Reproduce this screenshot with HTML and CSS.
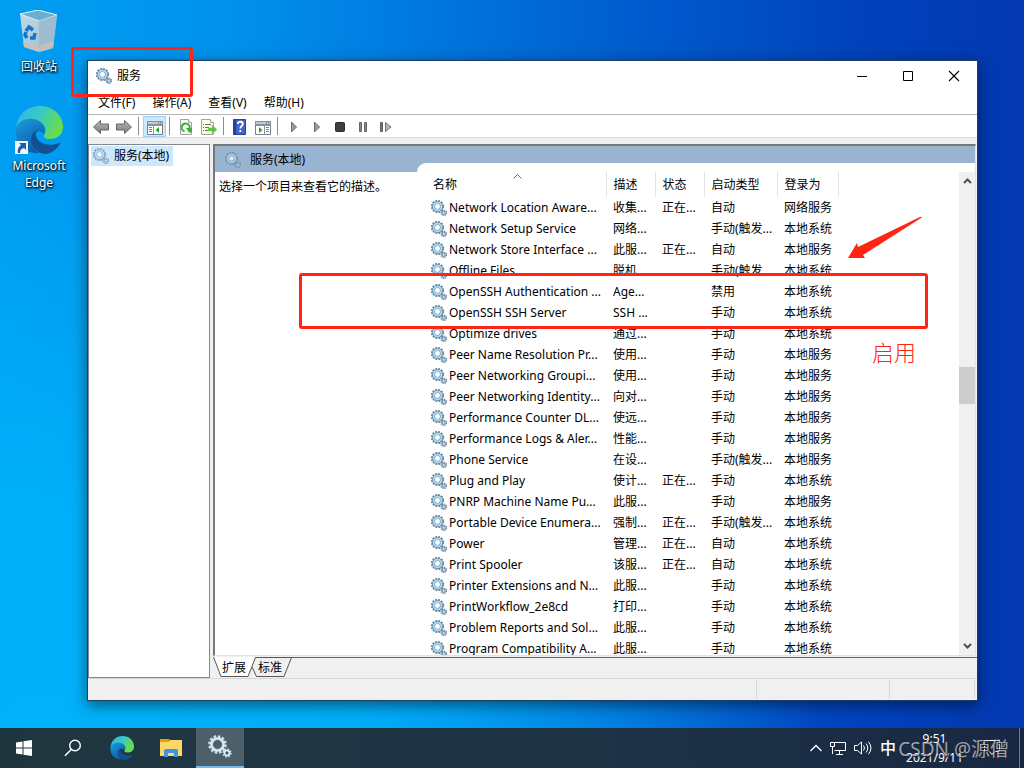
FILE: index.html
```html
<!DOCTYPE html>
<html lang="zh-CN">
<head>
<meta charset="utf-8">
<title>服务</title>
<link rel="stylesheet" href="styles.css">
</head>
<body>
<svg class="defs" aria-hidden="true">
  <defs>
    <linearGradient id="edge-top" x1="0" y1="0" x2="1" y2="0.4"><stop offset="0" stop-color="#2fb4e6"/><stop offset=".5" stop-color="#37c8c8"/><stop offset="1" stop-color="#66dd4e"/></linearGradient>
    <linearGradient id="edge-left" x1="0" y1="0" x2="0.6" y2="1"><stop offset="0" stop-color="#1b9de2"/><stop offset="1" stop-color="#0c59a4"/></linearGradient>
    <linearGradient id="bin-face" x1="0" y1="0" x2="1" y2="1"><stop offset="0" stop-color="#c3dcea"/><stop offset="1" stop-color="#9fb9c8"/></linearGradient>
    <linearGradient id="arrow-grey" x1="0" y1="0" x2="0" y2="1"><stop offset="0" stop-color="#b8b8b8"/><stop offset="1" stop-color="#7c7c7c"/></linearGradient>
    <symbol id="gear" viewBox="0 0 16 16">
      <circle cx="6.500" cy="6.500" r="5.700" fill="none" stroke="#6288a4" stroke-width="1.900" stroke-dasharray="1.800 1.184"/>
      <circle cx="6.500" cy="6.500" r="4" fill="none" stroke="#648fae" stroke-width="3.200"/>
      <circle cx="6.500" cy="6.500" r="3.900" fill="none" stroke="#b4d7ea" stroke-width="1.800"/>
      <circle cx="6.500" cy="6.500" r="2.200" fill="#fff"/>
      <circle cx="12.800" cy="12.800" r="2.700" fill="none" stroke="#67859b" stroke-width="1.400" stroke-dasharray="1.200 .92"/>
      <circle cx="12.800" cy="12.800" r="1.600" fill="#d6e7f1" stroke="#7c9db4" stroke-width="1.200"/>
    </symbol>
    <symbol id="edge" viewBox="0 0 48 48">
      <path d="M1 23C2 9 12 0 25 0c14 0 23 10 23 21 0 8-6 12-13 12-5 0-7-2-6-4 3-4 2-11-5-13C14 13 4 16 1 23z" fill="url(#edge-top)"/>
      <path d="M1 22c3-8 13-11 21-8 7 3 9 9 7 14-4-4-10-3-12 2-3 7 1 13 7 17C10 48-1 37 1 22z" fill="url(#edge-left)"/>
      <path d="M17 29c-4 9 4 19 14 19 6-1 11-5 14-10 1-1 0-2-1-1-9 4-21 1-23-7-1-3 1-6 3-6-3 0-6 2-7 5z" fill="#144f91"/>
    </symbol>
    <symbol id="play" viewBox="0 0 16 16"><path d="M5.500 3L10.500 8L5.500 13z" fill="#9a9a9a" stroke="#6f6f6f"/></symbol>
  </defs>
</svg>

<main class="desktop">
  <button class="shortcut shortcut-bin">
    <svg width="40" height="44" viewBox="0 0 40 44">
      <path d="M1 4L19 0L38 5L34 38L20 42L5 37z" fill="url(#bin-face)"/>
      <path d="M1 4L19 0L38 5L20 11z" fill="#69afd2" stroke="#e3eff5"/>
      <path d="M20 11L38 5L34 38L20 42z" fill="#9dbdce"/>
      <path d="M4 32L20 36L35 31L34 38L20 42L5 37z" fill="#c9c0be" opacity=".8"/>
      <g fill="none" stroke="#1276cd" stroke-width="3.500"><path d="M7 21L10 17L14 20"/><path d="M16 23L15 28L11 28"/><path d="M8 28L6 25L7 22"/></g>
    </svg>
    <span>回收站</span>
  </button>
  <button class="shortcut shortcut-edge">
    <span class="edge-picture">
      <svg width="48" height="48"><use href="#edge"/></svg>
      <svg class="link-mark" width="13" height="13" viewBox="0 0 13 13"><path d="M0 0h13v13H0z" fill="#f3f3f3"/><path d="M4 2h7v7L9 7C6 8 5 9 5 12H3C2 8 4 6 6 4z" fill="#1f5ea8"/></svg>
    </span>
    <span>Microsoft Edge</span>
  </button>

  <section class="window">
    <header class="titlebar">
      <svg width="16" height="16"><use href="#gear"/></svg>
      <h1>服务</h1>
      <div class="controls">
        <button aria-label="最小化"><svg width="12" height="12"><path d="M1 6.500h10" stroke="#000"/></svg></button>
        <button aria-label="最大化"><svg width="12" height="12"><path d="M1.500 1.500h9v9h-9z" fill="none" stroke="#000"/></svg></button>
        <button aria-label="关闭"><svg width="12" height="12"><path d="M1 1L11 11M11 1L1 11" stroke="#000" stroke-width="1.100"/></svg></button>
      </div>
    </header>
    <nav class="menubar">
      <button>文件(F)</button><button>操作(A)</button><button>查看(V)</button><button>帮助(H)</button>
    </nav>
    <div class="toolbar">
      <button aria-label="后退"><svg width="16" height="16" viewBox="0 0 16 16"><path d="M.5 8L7.500 1.500V5H15.500V11H7.500V14.500z" fill="url(#arrow-grey)" stroke="#666"/></svg></button>
      <button aria-label="前进"><svg width="16" height="16" viewBox="0 0 16 16"><path d="M15.500 8L8.500 1.500V5H.5V11H8.500V14.500z" fill="url(#arrow-grey)" stroke="#666"/></svg></button>
      <span class="sep"></span>
      <button class="pressed" aria-label="显示控制台树"><svg width="16" height="16" viewBox="0 0 16 16"><path d="M.5 2.500h15v13H.5z" fill="#fff" stroke="#788089"/><path d="M0 2h16v4H0z" fill="#87919c"/><path d="M1 4h10M12 4h1M14 4h1" stroke="#fff"/><path d="M1 6.500h14M6.500 7v8" stroke="#8a939c"/><path d="M2 8.500h3M2 10.500h3M2 12.500h3" stroke="#5d87ba"/><path d="M12 8v6L8.500 11z" fill="#2ea52e"/></svg></button>
      <span class="sep"></span>
      <button aria-label="刷新"><svg width="16" height="16" viewBox="0 0 16 16"><path d="M2.500.5h8l3 3v12h-11z" fill="#f7f7f7" stroke="#a3a3a3"/><path d="M10.500.5v3h3" fill="#fff" stroke="#a3a3a3"/><path d="M6.500 12.300A4 4 0 1 1 11.500 9.500" fill="none" stroke="#3aae37" stroke-width="2"/><path d="M8 9h6v4.500H11z" fill="#3aae37"/></svg></button>
      <button aria-label="导出列表"><svg width="16" height="16" viewBox="0 0 16 16"><path d="M.5.5h9l3 3v12H.5z" fill="#fffbe2" stroke="#aaa68e"/><path d="M9.500.5v3h3" fill="#fff" stroke="#aaa68e"/><path d="M2 5.500h1M2 8.500h1M2 11.500h1M4 5.500h6M4 8.500h4M4 11.500h4" stroke="#6a6a82"/><path d="M7 9h4V6L16 10.500L11 15V12H7z" fill="#57c63f" stroke="#80d46c" stroke-width=".5"/></svg></button>
      <span class="sep"></span>
      <button aria-label="帮助"><svg width="16" height="16" viewBox="0 0 16 16"><path d="M1.500.5h12v15h-12z" fill="#4463c8" stroke="#29429a"/><path d="M2 1h2v14H2z" fill="#273f97"/><path d="M5.800 5c0-3 5-3 5 0 0 2-2.500 2-2.500 4.500M8.300 11v2" fill="none" stroke="#fff" stroke-width="1.800"/></svg></button>
      <button aria-label="显示操作窗格"><svg width="16" height="16" viewBox="0 0 16 16"><path d="M.5 2.500h15v13H.5z" fill="#fff" stroke="#788089"/><path d="M0 2h16v4H0z" fill="#87919c"/><path d="M1 4h10M12 4h1M14 4h1" stroke="#fff"/><path d="M1 6.500h14M9.500 7v8" stroke="#8a939c"/><path d="M11 8.500h3M11 10.500h3M11 12.500h3" stroke="#5d87ba"/><path d="M4 8v6L7.500 11z" fill="#2ea52e"/></svg></button>
      <span class="sep"></span>
      <button aria-label="启动服务"><svg width="16" height="16"><use href="#play"/></svg></button>
      <button aria-label="继续服务"><svg width="16" height="16"><use href="#play"/></svg></button>
      <button aria-label="停止服务"><svg width="16" height="16" viewBox="0 0 16 16"><rect x="3.500" y="3.500" width="9" height="9" rx="1" fill="#3e3e3e" stroke="#2c2c2c"/></svg></button>
      <button aria-label="暂停服务"><svg width="16" height="16" viewBox="0 0 16 16"><path d="M4.500 3.500h2v9h-2zM9.500 3.500h2v9h-2z" fill="#888" stroke="#666"/></svg></button>
      <button aria-label="重启动服务"><svg width="16" height="16" viewBox="0 0 16 16"><path d="M2.500 3.500h2v9h-2z" fill="#777" stroke="#5e5e5e"/><path d="M7.500 3.500L13 8L7.500 12.500z" fill="#b5b5b5" stroke="#6f6f6f"/></svg></button>
    </div>

    <div class="panes">
      <aside class="tree">
        <button class="node"><svg width="16" height="16"><use href="#gear"/></svg>服务(本地)</button>
      </aside>
      <div class="result">
        <div class="result-frame">
          <div class="info">
            <h2><svg width="16" height="16"><use href="#gear"/></svg>服务(本地)</h2>
            <p>选择一个项目来查看它的描述。</p>
          </div>
          <div class="list-side">
            <div class="list-panel">
              <div class="list-scroll">
                <table>
                  <colgroup><col class="c-name"><col class="c-desc"><col class="c-state"><col class="c-start"><col class="c-logon"></colgroup>
                  <thead><tr><th>名称<svg class="sort" width="9" height="5" viewBox="0 0 9 5"><path d="M.5 4.500L4.500.5L8.500 4.500" fill="none" stroke="#6b6b6b"/></svg></th><th>描述</th><th>状态</th><th>启动类型</th><th>登录为</th></tr></thead>
                  <tbody>
                    <tr><td><svg><use href="#gear"/></svg>Network Location Aware...</td><td>收集...</td><td>正在...</td><td>自动</td><td>网络服务</td></tr>
                    <tr><td><svg><use href="#gear"/></svg>Network Setup Service</td><td>网络...</td><td></td><td>手动(触发...</td><td>本地系统</td></tr>
                    <tr><td><svg><use href="#gear"/></svg>Network Store Interface ...</td><td>此服...</td><td>正在...</td><td>自动</td><td>本地服务</td></tr>
                    <tr><td><svg><use href="#gear"/></svg>Offline Files</td><td>脱机...</td><td></td><td>手动(触发...</td><td>本地系统</td></tr>
                    <tr><td><svg><use href="#gear"/></svg>OpenSSH Authentication ...</td><td>Age...</td><td></td><td>禁用</td><td>本地系统</td></tr>
                    <tr><td><svg><use href="#gear"/></svg>OpenSSH SSH Server</td><td>SSH ...</td><td></td><td>手动</td><td>本地系统</td></tr>
                    <tr><td><svg><use href="#gear"/></svg>Optimize drives</td><td>通过...</td><td></td><td>手动</td><td>本地系统</td></tr>
                    <tr><td><svg><use href="#gear"/></svg>Peer Name Resolution Pr...</td><td>使用...</td><td></td><td>手动</td><td>本地服务</td></tr>
                    <tr><td><svg><use href="#gear"/></svg>Peer Networking Groupi...</td><td>使用...</td><td></td><td>手动</td><td>本地服务</td></tr>
                    <tr><td><svg><use href="#gear"/></svg>Peer Networking Identity...</td><td>向对...</td><td></td><td>手动</td><td>本地服务</td></tr>
                    <tr><td><svg><use href="#gear"/></svg>Performance Counter DL...</td><td>使远...</td><td></td><td>手动</td><td>本地服务</td></tr>
                    <tr><td><svg><use href="#gear"/></svg>Performance Logs &amp; Aler...</td><td>性能...</td><td></td><td>手动</td><td>本地服务</td></tr>
                    <tr><td><svg><use href="#gear"/></svg>Phone Service</td><td>在设...</td><td></td><td>手动(触发...</td><td>本地服务</td></tr>
                    <tr><td><svg><use href="#gear"/></svg>Plug and Play</td><td>使计...</td><td>正在...</td><td>手动</td><td>本地系统</td></tr>
                    <tr><td><svg><use href="#gear"/></svg>PNRP Machine Name Pu...</td><td>此服...</td><td></td><td>手动</td><td>本地服务</td></tr>
                    <tr><td><svg><use href="#gear"/></svg>Portable Device Enumera...</td><td>强制...</td><td>正在...</td><td>手动(触发...</td><td>本地系统</td></tr>
                    <tr><td><svg><use href="#gear"/></svg>Power</td><td>管理...</td><td>正在...</td><td>自动</td><td>本地系统</td></tr>
                    <tr><td><svg><use href="#gear"/></svg>Print Spooler</td><td>该服...</td><td>正在...</td><td>自动</td><td>本地系统</td></tr>
                    <tr><td><svg><use href="#gear"/></svg>Printer Extensions and N...</td><td>此服...</td><td></td><td>手动</td><td>本地系统</td></tr>
                    <tr><td><svg><use href="#gear"/></svg>PrintWorkflow_2e8cd</td><td>打印...</td><td></td><td>手动</td><td>本地系统</td></tr>
                    <tr><td><svg><use href="#gear"/></svg>Problem Reports and Sol...</td><td>此服...</td><td></td><td>手动</td><td>本地系统</td></tr>
                    <tr><td><svg><use href="#gear"/></svg>Program Compatibility A...</td><td>此服...</td><td></td><td>手动</td><td>本地系统</td></tr>
                  </tbody>
                </table>
              </div>
              <div class="scrollbar">
                <button aria-label="向上滚动"><svg width="9" height="6" viewBox="0 0 9 6"><path d="M1 5L4.500 1.500L8 5" fill="none" stroke="#505050" stroke-width="2"/></svg></button>
                <span class="track"><span class="thumb"></span></span>
                <button aria-label="向下滚动"><svg width="9" height="6" viewBox="0 0 9 6"><path d="M1 1L4.500 4.500L8 1" fill="none" stroke="#505050" stroke-width="2"/></svg></button>
              </div>
            </div>
          </div>
        </div>
        <div class="tabs">
          <svg class="tab-shape" width="80" height="21" viewBox="0 0 80 21">
            <path d="M0 0L8 19.500H35L42.500 0z" fill="#fff"/>
            <path d="M.5 0L8 19.500H35L42.500.5H79M39 10L43.500 19.500H71L78.500.5" fill="none" stroke="#555"/>
          </svg>
          <button>扩展</button><button>标准</button>
        </div>
      </div>
    </div>
    <footer class="status"><span></span><span></span><span></span></footer>
  </section>

  <div class="mark mark-title"></div>
  <div class="mark mark-rows"></div>
  <svg class="mark-arrow" width="76" height="44" viewBox="0 0 76 44"><path d="M1 42L10 27L11 31L73 1Q76 0 74 2L16 39L18 42z" fill="#ff2414"/></svg>
  <span class="mark-text">启用</span>
</main>

<footer class="taskbar">
  <button aria-label="开始"><svg width="16" height="16" viewBox="0 0 16 16"><path d="M0 2.500L6.500 1.500V7.500H0zM7.500 1.300L16 0V7.500H7.500zM0 8.500H6.500V14.500L0 13.500zM7.500 8.500H16V16L7.500 14.700z" fill="#fff"/></svg></button>
  <button aria-label="搜索"><svg width="18" height="18" viewBox="0 0 18 18"><circle cx="11" cy="6.500" r="5.300" fill="none" stroke="#fff" stroke-width="1.400"/><path d="M7.200 10.500L1 16.800" stroke="#fff" stroke-width="1.500"/></svg></button>
  <button aria-label="Microsoft Edge"><svg width="24" height="24"><use href="#edge"/></svg></button>
  <button aria-label="文件资源管理器"><svg width="22" height="18" viewBox="0 0 22 18"><path d="M0 0h9l1 2v2H0z" fill="#e0a110"/><path d="M0 3h9l1-2h12v16H0z" fill="#ffd767"/><path d="M4 18v-7l2-1h10l2 1v7h-4v-4H8v4z" fill="#3f96dc"/></svg></button>
  <button class="running" aria-label="服务"><svg width="24" height="24" viewBox="0 0 24 24">
    <circle cx="9.500" cy="9.500" r="8" fill="none" stroke="#c9dcec" stroke-width="2.600" stroke-dasharray="2.600 1.590"/>
    <circle cx="9.500" cy="9.500" r="6" fill="none" stroke="#dfeaf4" stroke-width="2.600"/>
    <circle cx="9.500" cy="9.500" r="4.700" fill="none" stroke="#8fb2d0" stroke-width=".6"/>
    <circle cx="19" cy="18" r="3.800" fill="none" stroke="#cfdfec" stroke-width="1.600" stroke-dasharray="1.700 1.280"/>
    <circle cx="19" cy="18" r="2.500" fill="none" stroke="#e6eff6" stroke-width="1.600"/>
  </svg></button>
  <div class="tray">
    <svg width="12" height="8" viewBox="0 0 12 8"><path d="M.5 7L6 1.500L11.500 7" fill="none" stroke="#fff" stroke-width="1.300"/></svg>
    <svg width="16" height="14" viewBox="0 0 16 14"><path d="M5 1.500h10.500v8H4.500M.5 1.500h4v4h-4zM2.500 6v7M9.500 10v3M6 13.500h7" fill="none" stroke="#fff"/></svg>
    <svg width="18" height="14" viewBox="0 0 18 14"><path d="M.5 4.500h3l4-3.500v12l-4-3.500h-3zM9.500 4.500q2 2.500 0 5M12 2.500q3.500 4.500 0 9M14.500.8q5 6.200 0 12.400" fill="none" stroke="#fff"/></svg>
    <span class="ime">中</span>
    <time>9:51<br>2021/9/11</time>
    <svg class="note" width="18" height="16" viewBox="0 0 18 16"><path d="M1.500.5h15v11h-5l-2.500 3-2.500-3h-5z" fill="none" stroke="#fff"/></svg>
    <span class="peek"></span>
  </div>
  <span class="watermark">CSDN @源僧</span>
</footer>
</body>
</html>
```
FILE: styles.css
```css
* { box-sizing: border-box; }

body {
  margin: 0;
  height: 100vh;
  display: flex;
  flex-direction: column;
  overflow: hidden;
  color: #000;
  font: 12px/16px "Noto Sans", "Noto Sans CJK SC", sans-serif;
}

button {
  padding: 0;
  border: 0;
  background: none;
  color: inherit;
  font: inherit;
}

svg { display: block; flex: none; }
.defs { position: absolute; width: 0; height: 0; }

.desktop {
  position: relative;
  flex: 1;
  min-height: 0;
  background:
    radial-gradient(ellipse 75% 75% at 5% 100%, #00b2fa 0%, rgba(0, 178, 250, .9) 40%, rgba(0, 178, 250, 0) 100%),
    linear-gradient(90deg, #009ff2 0%, #0092ec 22%, #0076de 43%, #0058cc 65%, #0042bc 84%, #0338b0 100%);
}

.shortcut {
  position: absolute;
  left: 2px;
  width: 74px;
  display: flex;
  flex-direction: column;
  align-items: center;
  gap: 4px;
  color: #fff;
  line-height: 17px;
  text-shadow: 1px 1px 2px #000, 0 1px 3px #000;
}
.shortcut-bin { top: 10px; }
.shortcut-edge { top: 106px; gap: 3px; }
.edge-picture { position: relative; }
.link-mark { position: absolute; left: 0; bottom: 0; }

.window {
  position: absolute;
  top: 60px;
  right: 46px;
  bottom: 27px;
  left: 87px;
  display: flex;
  flex-direction: column;
  border: 1px solid #1d3f63;
  background: #f0f0f0;
  box-shadow: 0 4px 14px rgba(0, 0, 0, .5);
}

.titlebar {
  display: flex;
  align-items: center;
  gap: 5px;
  height: 30px;
  padding-left: 8px;
  background: #fff;
}
.titlebar h1 { margin: 0; font-size: 12px; font-weight: 400; }
.controls { display: flex; margin-left: auto; }
.controls button {
  width: 46px;
  height: 30px;
  display: grid;
  place-items: center;
}

.menubar {
  display: flex;
  gap: 17px;
  height: 24px;
  padding-left: 10px;
  border-bottom: 1px solid #b5b5b5;
  background: #fff;
}

.toolbar {
  display: flex;
  align-items: flex-end;
  height: 23px;
  padding-left: 1px;
  border-bottom: 1px solid #dadada;
  background: #fff;
}
.toolbar button {
  width: 23px;
  height: 21px;
  display: grid;
  place-items: center;
}
.toolbar .pressed { border: 1px solid #99d1ff; background: #cce8ff; }
.sep { width: 8px; height: 20px; background: linear-gradient(#8d8d8d, #8d8d8d) 3px 0 / 1px 18px no-repeat; }

.panes {
  flex: 1;
  min-height: 0;
  display: flex;
  gap: 3px;
  padding-top: 6px;
}

.tree {
  width: 122px;
  padding: 1px 2px;
  border: 1px solid #828790;
  background: #fff;
}
.node {
  display: flex;
  align-items: center;
  gap: 5px;
  height: 20px;
  padding: 0 4px 0 2px;
  background: #cce8ff;
}
.node svg, h2 svg { opacity: .7; }

.result { flex: 1; min-width: 0; display: flex; flex-direction: column; }
.result-frame {
  flex: 1;
  min-height: 0;
  display: flex;
  margin-right: 1px;
  border: 1px solid #e3e3e3;
  border-top: 2px solid #777;
  border-left: 2px solid #777;
  background: #fff;
}
.info { width: 202px; }
.info h2 {
  display: flex;
  align-items: center;
  gap: 9px;
  height: 26px;
  margin: 0;
  padding: 2px 0 0 10px;
  background: #99b4d1;
  font-size: 12px;
  font-weight: 400;
}
.info p { margin: 0; padding: 7px 4px; white-space: nowrap; }

.list-side {
  flex: 1;
  min-width: 0;
  padding-top: 17px;
  background: #99b4d1;
}
.list-panel {
  display: flex;
  height: 100%;
  padding: 9px 0 0 12px;
  border-top-left-radius: 9px;
  background: #fff;
}
.list-scroll { flex: 1; min-width: 0; overflow: hidden; }

table { width: 409px; border-collapse: collapse; table-layout: fixed; }
.c-name { width: 177px; }
.c-desc, .c-state { width: 49px; }
.c-start { width: 73px; }
.c-logon { width: 61px; }
th {
  position: relative;
  height: 25px;
  padding: 0 0 0 7px;
  border-right: 1px solid #e2e2e2;
  font-weight: 400;
  text-align: left;
}
th:first-child { padding-left: 4px; }
.sort { position: absolute; top: 2px; left: 84px; }
td {
  height: 21px;
  padding: 0 0 0 7px;
  line-height: 20px;
  white-space: nowrap;
}
td:first-child { padding-left: 2px; }
td svg {
  display: inline-block;
  width: 16px;
  height: 16px;
  margin-right: 2px;
  vertical-align: -4px;
}

.scrollbar {
  width: 16px;
  display: flex;
  flex-direction: column;
  background: #f0f0f0;
}
.scrollbar button { height: 18px; display: grid; place-items: center; }
.track { flex: 1; padding-top: 177px; }
.thumb { display: block; height: 37px; background: #cdcdcd; }

.tabs {
  position: relative;
  display: flex;
  gap: 12px;
  height: 22px;
  padding: 1px 0 0 9px;
  background: linear-gradient(#666, #666) 42px 1px / 100% 1px no-repeat;
}
.tab-shape { position: absolute; top: 1px; left: 0; }
.tabs button { position: relative; }

.status {
  display: flex;
  height: 22px;
  padding: 1px 2px 1px 0;
  border-top: 1px solid #d7d7d7;
}
.status span { border-right: 1px solid #d7d7d7; }
.status span:first-child { flex: 1; }
.status span:nth-child(2) { width: 133px; }
.status span:last-child { width: 85px; }

.mark {
  position: absolute;
  border: 3px solid #ff2414;
  border-radius: 3px;
}
.mark-title { top: 47px; left: 71px; width: 122px; height: 50px; }
.mark-rows { top: 273px; left: 299px; width: 629px; height: 56px; }
.mark-arrow { position: absolute; top: 216px; left: 847px; }
.mark-text {
  position: absolute;
  top: 337px;
  left: 872px;
  color: #ff2414;
  font-size: 22px;
  font-weight: 300;
  line-height: 30px;
}

.taskbar {
  position: relative;
  display: flex;
  gap: 1px;
  height: 40px;
  background: linear-gradient(90deg, #20363f, #1f3545 50%, #182844);
  color: #fff;
}
.taskbar button {
  width: 48px;
  display: grid;
  place-items: center;
}
.taskbar .running { border-bottom: 2px solid #76b9ed; background: #4d6069; }
.tray {
  display: flex;
  align-items: center;
  gap: 8px;
  margin-left: auto;
}
.ime { font-size: 16px; font-weight: 500; }
time { margin-left: 2px; line-height: 19px; text-align: center; }
.note { margin-left: 12px; }
.peek { width: 5px; height: 40px; border-left: 1px solid #6e7a8b; margin-left: 10px; }
.watermark {
  position: absolute;
  top: 8px;
  right: 15px;
  color: rgba(215, 220, 228, .7);
  font-size: 19px;
  line-height: 26px;
  text-shadow: 1px 1px 1px #222;
}
```
